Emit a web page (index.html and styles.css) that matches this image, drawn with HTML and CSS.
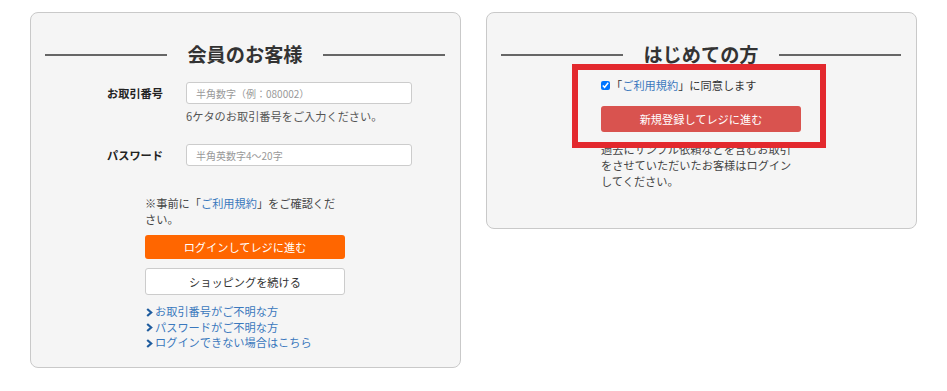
FILE: index.html
```html
<!DOCTYPE html>
<html lang="ja">

<head>
  <meta charset="UTF-8">
  <meta name="viewport" content="width=device-width, initial-scale=1.0">
  <title>ログイン</title>
  <link rel="stylesheet" href="styles.css">
</head>

<body>
  <div class="login_wrap">
    <div class="card member">
      <h2 class="card_title"><span>会員のお客様</span></h2>

      <div class="form_row first">
        <label class="form_label">お取引番号</label>
        <div class="form_control">
          <input type="text" placeholder="半角数字（例：080002）">
          <p class="hint">6ケタのお取引番号をご入力ください。</p>
        </div>
      </div>
      <div class="form_row second">
        <label class="form_label">パスワード</label>
        <div class="form_control">
          <input type="password" placeholder="半角英数字4〜20字">
        </div>
      </div>

      <div class="col">
        <p class="notice">※事前に「<a href="#">ご利用規約</a>」をご確認ください。</p>
        <button class="btn btn_orange">ログインしてレジに進む</button>
        <button class="btn btn_white">ショッピングを続ける</button>
        <ul class="links">
          <li><a href="#"><svg width="7" height="9" viewBox="0 0 7 9"><path d="M1.2 1 L5.2 4.5 L1.2 8" fill="none" stroke="#1f5c9e" stroke-width="2.2"/></svg>お取引番号がご不明な方</a></li>
          <li><a href="#"><svg width="7" height="9" viewBox="0 0 7 9"><path d="M1.2 1 L5.2 4.5 L1.2 8" fill="none" stroke="#1f5c9e" stroke-width="2.2"/></svg>パスワードがご不明な方</a></li>
          <li><a href="#"><svg width="7" height="9" viewBox="0 0 7 9"><path d="M1.2 1 L5.2 4.5 L1.2 8" fill="none" stroke="#1f5c9e" stroke-width="2.2"/></svg>ログインできない場合はこちら</a></li>
        </ul>
      </div>
    </div>

    <div class="card guest">
      <h2 class="card_title"><span>はじめての方</span></h2>

      <div class="highlight">
        <label class="agree"><input type="checkbox" checked>「<a href="#">ご利用規約</a>」に同意します</label>
        <button class="btn btn_red">新規登録してレジに進む</button>
      </div>
      <p class="guest_text">過去にサンプル依頼などを含むお取引をさせていただいたお客様はログインしてください。</p>
    </div>
  </div>
</body>

</html>
```

FILE: styles.css
```css
* {
  box-sizing: border-box;
}

body {
  margin: 0;
  background-color: #fff;
  color: #333;
  font-family: "Noto Sans CJK JP", "Noto Sans", sans-serif;
  font-size: 0.7rem;
}

p,
ul,
h2 {
  margin: 0;
  padding: 0;
}

a {
  color: #3a78bd;
  text-decoration: none;
}

.login_wrap {
  display: flex;
  align-items: flex-start;
  gap: 25px;
  padding: 12px 0 0 30px;
}

.card {
  width: 431px;
  background-color: #f5f5f5;
  border: 1px solid #c9c9c9;
  border-radius: 8px;
  padding: 32px 15px 0 14px;
}

.member {
  padding-bottom: 16px;
}

.guest {
  padding-bottom: 39px;
}

.card_title {
  display: flex;
  align-items: center;
  gap: 20px;
  font-size: 1.2rem;
  line-height: 19px;
  font-weight: bold;
  color: #333;
}

.card_title::before,
.card_title::after {
  content: "";
  flex: 1;
  height: 2px;
  background-color: #666;
}

/* form */
.form_row {
  display: grid;
  grid-template-columns: 79px 226px;
  margin-left: 62px;
}

.form_row.first {
  margin-top: 18px;
}

.form_row.second {
  margin-top: 20px;
}

.form_label {
  font-weight: bold;
  line-height: 22px;
  color: #222;
}

.form_control input {
  display: block;
  width: 100%;
  height: 22px;
  border: 1px solid #ccc;
  border-radius: 3px;
  background-color: #fff;
  padding: 0 9px;
  font-family: inherit;
  font-size: 10px;
  outline: none;
}

.form_control input::placeholder {
  color: #999;
}

.hint {
  margin-top: 4px;
  line-height: 16px;
  color: #555;
}

/* centered column */
.col {
  width: 200px;
  margin: 29px auto 0;
}

.notice {
  line-height: 16px;
  color: #444;
}

.btn {
  display: block;
  width: 200px;
  border-radius: 3px;
  font-family: inherit;
  font-size: 0.7rem;
  cursor: pointer;
}

.btn_orange {
  margin-top: 8px;
  height: 24px;
  border: none;
  background-color: #ff6600;
  color: #fff;
}

.btn_white {
  margin-top: 9px;
  height: 27px;
  border: 1px solid #ccc;
  background-color: #fff;
  color: #333;
}

.links {
  list-style: none;
  margin-top: 9px;
  line-height: 15.5px;
}

.links svg {
  margin: 0 2px 0 1px;
  vertical-align: -0.5px;
}

/* guest */
.highlight {
  position: relative;
  z-index: 1;
  width: 254px;
  margin: 0 0 0 71px;
  padding: 7px 19px 10px 23px;
  border: 6px solid #e3292e;
  background-color: #f5f5f5;
}

.agree {
  display: flex;
  align-items: center;
  line-height: 16px;
  color: #333;
}

.agree input {
  width: 9px;
  height: 9px;
  margin: 0 1px 0 0;
}

.btn_red {
  margin-top: 13px;
  height: 26px;
  border: none;
  background-color: #d9534f;
  color: #fff;
}

.guest_text {
  width: 200px;
  margin: -7px auto 0;
  line-height: 16px;
  color: #444;
}
```
